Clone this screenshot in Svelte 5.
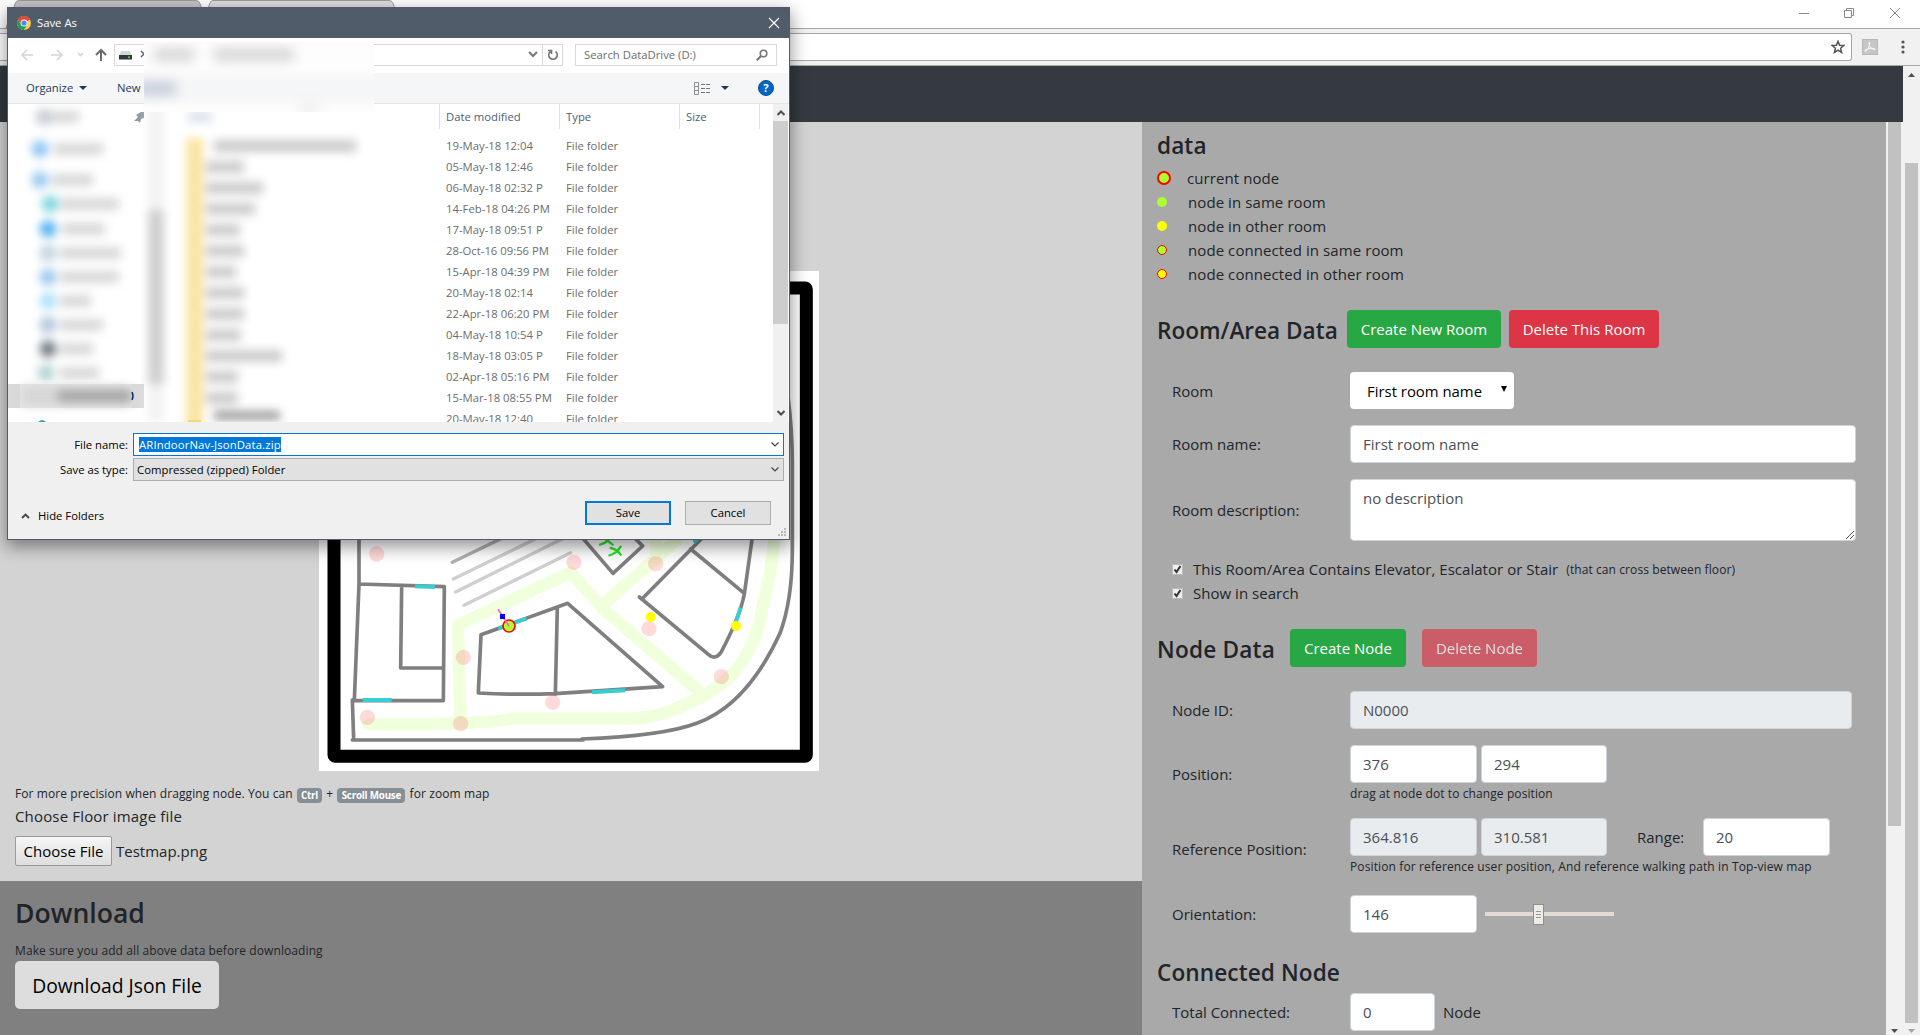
<script>
  const files = [
    ['19-May-18 12:04', 140], ['05-May-18 12:46', 36], ['06-May-18 02:32 P', 55],
    ['14-Feb-18 04:26 PM', 47], ['17-May-18 09:51 P', 32], ['28-Oct-16 09:56 PM', 36],
    ['15-Apr-18 04:39 PM', 28], ['20-May-18 02:14', 36], ['22-Apr-18 06:20 PM', 36],
    ['04-May-18 10:54 P', 33], ['18-May-18 03:05 P', 74], ['02-Apr-18 05:16 PM', 30],
    ['15-Mar-18 08:55 PM', 30], ['20-May-18 12:40', 0]
  ];
  // places in the folder tree: [icon x, y, icon colour, label x, label width]
  const places = [
    [36, 13, '#c9ced3', 46, 24], [32, 45, '#8fc5f2', 48, 46], [32, 76, '#98caf0', 46, 38],
    [42, 100, '#7cd8de', 54, 56], [40, 125, '#55b2f0', 56, 40], [40, 149, '#c0d3e0', 54, 58],
    [40, 173, '#9cc7ee', 54, 56], [40, 197, '#aee0fa', 54, 28], [40, 221, '#b3c5dd', 54, 40],
    [40, 245, '#737c83', 54, 30], [38, 269, '#b0d2d2', 54, 36]
  ];
  const legend = [
    ['current', 'current node'], ['same', 'node in same room'], ['other', 'node in other room'],
    ['same linked', 'node connected in same room'], ['other linked', 'node connected in other room']
  ];
  const spots = [
    [200, 72], [792, 97], [1037, 101], [1017, 296], [460, 382], [172, 562],
    [452, 581], [728, 517], [1234, 440]
  ];
</script>

<div class="screen">
  <header class="chrome">
    <div class="tabstrip">
      <svg class="tabs" width="420" height="28" viewBox="0 0 420 28">
        <path d="M6 28 15 4q1-3.500 4-3.500H196q3 0 4 3l9 24" fill="#c4c4c4" stroke="#9b9b9b" />
        <path d="M203 22 210 3q1-2.500 3-2.500H389q3 0 4 3l9 24" fill="#dedede" stroke="#9b9b9b" />
      </svg>
      <svg class="winctl" width="120" height="28" viewBox="0 0 120 28" fill="none" stroke="#8a8a8a">
        <path d="M9 13.500h10M54.500 10.500h7v7h-7zM56.500 10V8.500h7v7H62M100 8l10 10M110 8l-10 10" />
      </svg>
    </div>
    <div class="toolbar">
      <div class="omnibox">
        <svg width="14" height="14" viewBox="0 0 14 14" fill="none" stroke="#555" stroke-width="1.500"><path d="M7 1.300 8.600 5.200 12.900 5.500 9.600 8.200 10.600 12.500 7 10.200 3.400 12.500 4.400 8.200 1.100 5.500 5.400 5.200z" /></svg>
      </div>
      <svg class="pdf" width="16" height="16" viewBox="0 0 16 16"><rect width="16" height="16" fill="#b8b8b8" /><rect x="1" y="1" width="14" height="14" fill="#c6c6c6" /><path d="M7 3.500c1.500-1 .8 3-1 6-1.500 2.500-3 3.500-3 2.500 0-1.500 4-2.700 7-2.700s4 1.700 2 1.500C9 10.500 6.500 6 7 3.500z" fill="none" stroke="#f2f2f2" stroke-width="1.100" /></svg>
      <svg class="dots" width="4" height="14" viewBox="0 0 4 14" fill="#555"><circle cx="2" cy="2" r="1.600" /><circle cx="2" cy="7" r="1.600" /><circle cx="2" cy="12" r="1.600" /></svg>
    </div>
  </header>

  <div class="view">
    <div class="page">
      <nav class="navbar"></nav>
      <div class="cols">
        <main class="left">
          <section class="floor">
            <svg class="map" width="500" height="500" viewBox="0 0 500 500">
              <rect width="500" height="500" fill="#fff" />
              <g transform="translate(-9 259) scale(.33333)" fill="none" stroke-linecap="round" stroke-linejoin="round">
                <rect x="72" y="-726" width="1417" height="1405" rx="4" stroke="#000" stroke-width="39" />
                <g stroke="#f0ffdc" stroke-width="37">
                  <path d="M175 583 Q300 585 440 580 T600 566 H940 Q1040 566 1110 530 Q1240 480 1300 390 Q1345 320 1360 220 Q1395 90 1400 -100" />
                  <path d="M452 575 444 285 782 127 878 235 1165 482M878 225 1060 65 1130 0M1038 90V0" />
                </g>
                <g stroke="#cfcfcf" stroke-width="10">
                  <path d="M427 97 600 13" stroke="#b0b0b0" /><path d="M430 147 700 15M437 186 780 15M462 226 782 68" />
                </g>
                <g stroke="#7f7f7f" stroke-width="11">
                  <path d="M147 -100V162L133 512M127 510 131 628M147 162 403 170 400 512H127M275 168 272 414H400M127 630H820M815 627Q1060 618 1160 580C1270 540 1350 440 1410 310Q1447 210 1447 60V-200Q1447 -400 1395 -600" />
                  <path d="M513 314 773 220 1058 470 Q900 480 735 491 Q620 495 505 489zM742 232 736 493M780 -20 909 130 998 48 960 10" />
                  <path d="M1230 -30 998 205M988 201 1195 373Q1215 392 1233 367 1290 260 1303 192L1330 0M1142 57 1303 190" />
                </g>
                <g stroke="#38cdd0" stroke-width="12" stroke-linecap="butt">
                  <path d="M315 169 375 171M158 510H245M565 295 649 266M846 487 946 481M1278 274 1292 233M1152 38 1180 10" />
                </g>
                <path d="M870 44q22-6 34-24M884 26l24 18M898 76q20-4 34-26M902 54q20 4 30 20" stroke="#2be62b" stroke-width="7" />
                <g fill="#f66" fill-opacity=".24">
                  {#each spots as [cx, cy]}<circle {cx} {cy} r="23" />{/each}
                </g>
                <circle cx="1022" cy="261" r="15" fill="#ff0" /><circle cx="1278" cy="288" r="15" fill="#ff0" />
                <circle cx="597" cy="288" r="18" fill="#adff2f" stroke="#f00" stroke-width="5" />
                <path d="M564 238 597 288" stroke="#ff69b4" stroke-width="5" stroke-linecap="butt" />
                <rect x="570" y="252" width="15" height="15" fill="#00f" />
              </g>
            </svg>
            <p class="small hint">For more precision when dragging node. You can <b class="key ctrl">Ctrl</b> + <b class="key scroll">Scroll Mouse</b> for zoom map</p>
            <p class="choose">Choose Floor image file</p>
            <div class="filepick"><button>Choose File</button><span>Testmap.png</span></div>
          </section>
          <section class="download">
            <h2>Download</h2>
            <p class="small">Make sure you add all above data before downloading</p>
            <button>Download Json File</button>
          </section>
        </main>

        <aside class="right">
          <h3 class="datahead">data</h3>
          <ul>
            {#each legend as [kind, text]}
              <li><span class="dotbox"><i class="dot {kind}"></i></span>{text}</li>
            {/each}
          </ul>
          <div class="head roomhead"><h3>Room/Area Data</h3><button class="btn green newroom">Create New Room</button><button class="btn red delroom">Delete This Room</button></div>
          <div class="row r-room"><span class="label">Room</span><div class="select">First room name<svg width="8" height="6" viewBox="0 0 8 6"><path d="M1 0h6L4 6z" /></svg></div></div>
          <div class="row r-name"><span class="label">Room name:</span><div class="field wide">First room name</div></div>
          <div class="row r-desc"><span class="label">Room description:</span><div class="field area">no description<svg width="10" height="10" viewBox="0 0 10 10" stroke="#555"><path d="M1 9 9 1M5 9 9 5" /></svg></div></div>
          <div class="check first"><span class="box"><svg width="9" height="9" viewBox="0 0 9 9" fill="none" stroke="#333" stroke-width="2"><path d="M1.500 4.500 3.500 7 7.500 1" /></svg></span>This Room/Area Contains Elevator, Escalator or Stair<span class="small note">(that can cross between floor)</span></div>
          <div class="check"><span class="box"><svg width="9" height="9" viewBox="0 0 9 9" fill="none" stroke="#333" stroke-width="2"><path d="M1.500 4.500 3.500 7 7.500 1" /></svg></span>Show in search</div>
          <div class="head nodehead"><h3>Node Data</h3><button class="btn green newnode">Create Node</button><button class="btn red delnode">Delete Node</button></div>
          <div class="row r-id"><span class="label">Node ID:</span><div class="field id ro">N0000</div></div>
          <div class="row r-pos"><span class="label">Position:</span><div class="stack"><div class="pair"><div class="field num">376</div><div class="field num second">294</div></div><p class="small">drag at node dot to change position</p></div></div>
          <div class="row r-ref"><span class="label">Reference Position:</span><div class="stack"><div class="pair"><div class="field num ro">364.816</div><div class="field num second ro">310.581</div><span class="range">Range:</span><div class="field num">20</div></div><p class="small reftext">Position for reference user position, And reference walking path in Top-view map</p></div></div>
          <div class="row r-ori"><span class="label">Orientation:</span><div class="field num">146</div>
            <svg class="slider" width="129" height="22" viewBox="0 0 129 22"><path d="M0 8h129v4H0z" fill="#e0dcd5" /><rect x="48.500" y=".5" width="10" height="20" fill="#efebe7" stroke="#958c82" /><path d="M51 7.500h5M51 10.500h5M51 13.500h5" stroke="#999" /></svg>
          </div>
          <h3 class="connhead">Connected Node</h3>
          <div class="row r-total"><span class="label">Total Connected:</span><div class="field total">0</div><span class="unit">Node</span></div>
        </aside>
        <div class="innerbar"><i></i><svg width="7" height="4" viewBox="0 0 7 4"><path d="M0 0h7L3.500 4z" fill="#505050" /></svg></div>
      </div>
    </div>
    <div class="outerbar">
      <svg width="7" height="4" viewBox="0 0 7 4"><path d="M0 4h7L3.500 0z" fill="#505050" /></svg>
      <i></i>
      <svg class="down" width="7" height="4" viewBox="0 0 7 4"><path d="M0 0h7L3.500 4z" fill="#a3a3a3" /></svg>
    </div>
  </div>

  <div class="dialog">
    <div class="title">
      <svg width="14" height="14" viewBox="0 0 14 14"><circle cx="7" cy="7" r="7" fill="#fc4" /><path d="M7 7 .94 3.500A7 7 0 0 1 13.060 3.500z" fill="#dd4b3e" /><path d="M7 3.500h6.060A7 7 0 0 0 .94 3.500L4 8.700z" fill="#dd4b3e" /><path d="M.94 3.500A7 7 0 0 0 7 14L10 8.800 4 8.800z" fill="#1a9f58" /><circle cx="7" cy="7" r="3.500" fill="#f4f4f4" /><circle cx="7" cy="7" r="2.600" fill="#4a8af4" /></svg>
      <span>Save As</span>
      <svg class="x" width="12" height="12" viewBox="0 0 12 12" stroke="#fff" stroke-width="1.200"><path d="M1 1l10 10M11 1 1 11" /></svg>
    </div>
    <div class="addr">
      <svg width="104" height="20" viewBox="0 0 104 20" fill="none" stroke-width="1.700">
        <path d="M25 10H14M19 5l-5 5 5 5M43 10h11M49 5l5 5-5 5M70 8l2.500 2.500L75 8" stroke="#d6d6d6" />
        <path d="M93 16V5M88 10l5-5 5 5" stroke="#6b6b6b" stroke-width="2" />
      </svg>
      <div class="path">
        <svg class="drive" width="28" height="14" viewBox="0 0 28 14"><path d="M3 3h9l2 5H1z" fill="#d4d7da" /><rect x="1" y="7" width="13" height="4.500" fill="#34383b" /><circle cx="11" cy="9.300" r="1" fill="#3e4" /><path d="M23 3l3 3-3 3" fill="none" stroke="#666" stroke-width="1.500" /></svg>
        <svg class="chev" width="10" height="7" viewBox="0 0 10 7" fill="none" stroke="#777" stroke-width="2"><path d="M1 1l4 4 4-4" /></svg>
        <span class="reload"><svg width="12" height="12" viewBox="0 0 12 12" fill="none" stroke="#777" stroke-width="1.600"><path d="M3.500 2.500A4.300 4.300 0 1 0 8.500 2.500M1 1.500h3.500V5" /></svg></span>
      </div>
      <div class="search"><span>Search DataDrive (D:)</span><svg width="12" height="12" viewBox="0 0 12 12" fill="none" stroke="#777" stroke-width="1.600"><circle cx="7.500" cy="4.500" r="3.300" /><path d="M5 7 .8 11.200" stroke-width="2" /></svg></div>
    </div>
    <div class="tools">
      <span class="org">Organize</span><svg class="tri" width="8" height="4" viewBox="0 0 8 4"><path d="M0 0h8L4 4z" fill="#1e395b" /></svg>
      <span class="new">New</span>
      <svg class="views" width="17" height="13" viewBox="0 0 17 13" fill="none"><path d="M.5.500h4v12h-4zM.5 4.500h4M.5 8.500h4" stroke="#8f8f8f" /><path d="M7 2.500h4M12 2.500h4M7 6.500h4M12 6.500h4M7 10.500h4M12 10.500h4" stroke="#777" /></svg>
      <svg class="tri2" width="8" height="4" viewBox="0 0 8 4"><path d="M0 0h8L4 4z" fill="#1e395b" /></svg>
      <span class="help">?</span>
    </div>
    <div class="pane">
      <svg class="tree" width="431" height="318" viewBox="0 0 431 318">
        <path d="M0 280h136v24H0z" fill="#d9d9d9" />
        <g class="soft">
          {#each places as [x, y, color, lx, lw]}
            <circle cx={x} cy={y} r="8.500" fill={color} /><rect x={lx - 2} y={y - 6} width={lw + 3} height="12" fill="#d8d8d8" />
          {/each}
        </g>
        <path d="M12 276h112v36H12z" fill="#fff" fill-opacity=".4" />
        <g class="soft">
          <rect x="14" y="282" width="108" height="20" fill="#d6d6d6" /><rect x="50" y="286" width="74" height="12" fill="#a6a6a6" />
        </g>
        <path d="M124 280v24h12V280z" fill="#d9d9d9" /><path d="M124 288q2 4 0 8" stroke="#0b2a66" fill="none" stroke-width="1.500" />
        <path d="M30 318q4-4 8 0z" fill="#4a9dbf" />
        <path d="M136 0h295v318H136z" fill="#fff" />
        <path d="M126 17l4-4-2-2 5-3 3 0v6l-3 1-1 4-2-2z" fill="#8d99a5" />
        <g class="soft">
          <rect x="140" y="0" width="16" height="318" fill="#f2f2f2" /><rect x="140" y="106" width="16" height="174" fill="#cfcfcf" />
          <rect x="180" y="8" width="24" height="10" fill="#dadfec" />
          <rect x="178" y="34" width="17" height="290" fill="#fae3a2" />
          {#each files as [, w], i}
            {#if w}<rect x={i ? 198 : 206} y={36 + i * 21} width={w + 2} height="12" fill="#cbcbcb" />{/if}
          {/each}
          <rect x="206" y="307" width="66" height="9" fill="#999" />
        </g>
        <path d="M180 316h13v2h-13z" fill="#f7d774" />
      </svg>
      <div class="list">
        <div class="cols-head"><span>Date modified</span><span>Type</span><span class="size">Size</span></div>
        {#each files as [date]}
          <div class="file"><span>{date}</span><span>File folder</span></div>
        {/each}
      </div>
      <div class="bar">
        <svg width="8" height="6" viewBox="0 0 8 6" fill="none" stroke="#505050" stroke-width="2"><path d="M.5 5 4 1.500 7.500 5" /></svg>
        <i></i>
        <svg width="8" height="6" viewBox="0 0 8 6" fill="none" stroke="#505050" stroke-width="2"><path d="M.5 1 4 4.500 7.500 1" /></svg>
      </div>
    </div>
    <div class="form">
      <div class="frow"><span class="flabel">File name:</span><div class="combo active"><span class="sel">ARIndoorNav-JsonData.zip</span><svg width="8" height="5" viewBox="0 0 8 5" fill="none" stroke="#444" stroke-width="1.200"><path d="M.5.500 4 4 7.500.500" /></svg></div></div>
      <div class="frow"><span class="flabel">Save as type:</span><div class="combo"><span>Compressed (zipped) Folder</span><svg width="8" height="5" viewBox="0 0 8 5" fill="none" stroke="#444" stroke-width="1.200"><path d="M.5.500 4 4 7.500.500" /></svg></div></div>
      <div class="actions">
        <svg width="9" height="6" viewBox="0 0 9 6" fill="none" stroke="#444" stroke-width="1.800"><path d="M1 5 4.500 1.500 8 5" /></svg><span class="hide">Hide Folders</span>
        <button class="primary">Save</button><button>Cancel</button>
      </div>
      <svg class="grip" width="8" height="8" viewBox="0 0 8 8" fill="#b8b8b8"><path d="M6 0h2v2H6zM3 3h2v2H3zM6 3h2v2H6zM0 6h2v2H0zM3 6h2v2H3zM6 6h2v2H6z" /></svg>
    </div>
    <div class="smudge"><i class="s1"></i><i class="s2"></i><i class="s3"></i><i class="s4"></i></div>
  </div>
</div>

<style>
  :global(body) { margin: 0; overflow: hidden; }
  * { box-sizing: border-box; }
  svg { display: block; flex: none; }
  p, h2, h3, ul { margin: 0; padding: 0; }
  button { font: inherit; letter-spacing: inherit; padding: 0; white-space: nowrap; }
  .screen { position: relative; width: 1920px; height: 1035px; overflow: hidden; display: flex; flex-direction: column; font: 15px/24px "Open Sans", "Noto Sans", sans-serif; color: #212529; white-space: nowrap; }
  .chrome { height: 66px; flex: none; background: #f1f1f1; border-bottom: 1px solid #aaa; }
  .tabstrip { height: 29px; background: #fff; border-bottom: 1px solid #a6a6a6; display: flex; justify-content: space-between; }
  .winctl { margin-right: 10px; }
  .toolbar { height: 36px; display: flex; align-items: center; }
  .omnibox { width: 1852px; height: 28px; border: 1px solid #a6a6a6; border-left: 0; border-radius: 0 3px 3px 0; background: #fff; display: flex; align-items: center; justify-content: flex-end; padding-right: 6px; }
  .pdf { margin-left: 10px; }
  .dots { margin-left: 23px; }
  .view { flex: 1; min-height: 0; display: flex; }
  .page { width: 1903px; display: flex; flex-direction: column; }
  .navbar { height: 56px; flex: none; background: #343a40; }
  .cols { flex: 1; min-height: 0; display: flex; }
  .left { width: 1142px; display: flex; flex-direction: column; }
  .floor { height: 759px; background: #d3d3d3; padding: 149px 15px 0; }
  .map { margin-left: 304px; }
  .small { font-size: 12px; line-height: 20px; letter-spacing: .09px; }
  .hint { margin-top: 13px; height: 20px; }
  .key { display: inline-block; height: 15px; margin: 0 1px; border-radius: 4px; background: #868e96; color: #fff; font-size: 9.800px; line-height: 15px; text-align: center; vertical-align: -1px; letter-spacing: -.2px; }
  .ctrl { width: 25px; }
  .scroll { width: 68px; }
  .choose { height: 24px; letter-spacing: .16px; }
  .filepick { display: flex; align-items: center; margin-top: 8px; gap: 4px; }
  .filepick button { width: 97px; height: 30px; border: 1px solid #999; border-radius: 2px; background: linear-gradient(#f6f6f6, #dedede); color: #000; }
  .download { flex: 1; background: #808080; padding: 15px; }
  .download h2 { font-size: 26.600px; line-height: 34px; font-weight: 600; height: 45px; }
  .download button { display: block; width: 204px; height: 48px; border: 0; border-radius: 5px; background: #ddd; font-size: 19.300px; color: #000; padding-top: 1px; }
  .right { width: 744px; background: #a9a9a9; padding: 9px 0 0 15px; overflow: hidden; }
  h3 { font-size: 22.600px; line-height: 30px; font-weight: 600; letter-spacing: .1px; }
  ul { list-style: none; margin-top: 5px; letter-spacing: .08px; }
  li { height: 24px; display: flex; line-height: 25px; }
  .dotbox { width: 31px; display: flex; align-items: center; }
  li:first-child .dotbox { width: 30px; }
  .dot { width: 10px; height: 10px; border-radius: 50%; background: #adff2f; }
  .current { width: 14px; height: 14px; border: 2px solid red; }
  .other { background: #ff0; }
  .linked { border: 1px solid red; }
  .head { display: flex; align-items: center; height: 38px; }
  .roomhead { margin-top: 24px; }
  .roomhead h3 { width: 190px; padding-top: 4px; letter-spacing: 0; }
  .btn { height: 38px; border: 0; border-radius: 4px; color: #fff; }
  .green { background: #28a745; }
  .red { background: #dc3545; }
  .newroom { width: 154px; margin-right: 8px; }
  .delroom { width: 150px; }
  .nodehead { margin-top: 24px; }
  .nodehead h3 { width: 133px; padding-top: 4px; letter-spacing: .2px; }
  .newnode { width: 116px; margin-right: 16px; }
  .delnode { width: 115px; opacity: .65; }
  .row { display: flex; align-items: center; padding-left: 15px; }
  .label { width: 178px; }
  .r-room { margin-top: 24px; height: 37px; }
  .r-name { margin-top: 16px; }
  .r-desc { margin-top: 16px; }
  .select { width: 164px; height: 37px; border-radius: 4px; background: #fff; color: #000; display: flex; align-items: center; justify-content: space-between; padding: 0 6px 0 17px; font-size: 14.900px; }
  .select svg { margin-top: -4px; }
  .field { height: 38px; border: 1px solid #ced4da; border-radius: 4px; background: #fff; color: #495057; padding: 6px 12px; }
  .wide { width: 506px; }
  .area { width: 506px; height: 62px; display: flex; justify-content: space-between; }
  .area svg { align-self: flex-end; margin: 0 -12px -6px 0; }
  .ro { background: #e9ecef; }
  .id { width: 502px; }
  .num { width: 127px; }
  .second { width: 126px; }
  .check { display: flex; align-items: center; height: 24px; padding-left: 15px; letter-spacing: .03px; }
  .check.first { margin-top: 16px; }
  .box { width: 11px; height: 11px; background: #eee; border: 1px solid #bbb; margin-right: 10px; }
  .note { margin-left: 8px; padding-top: 2px; }
  .r-id { margin-top: 24px; }
  .r-pos { margin-top: 16px; height: 58px; }
  .r-ref { margin-top: 15px; height: 62px; }
  .pair { display: flex; gap: 4px; align-items: center; }
  .range { width: 88px; padding-left: 26px; }
  .stack { align-self: flex-start; }
  .stack .small { padding-top: 1px; }
  .reftext { letter-spacing: .12px; }
  .r-ori { margin-top: 15px; }
  .slider { margin: 1px 0 0 8px; }
  .connhead { margin-top: 25px; height: 35px; }
  .unit { margin-left: 8px; }
  .total { width: 85px; }
  .innerbar { width: 17px; background: #f1f1f1; display: flex; flex-direction: column; align-items: center; justify-content: space-between; padding-bottom: 2px; }
  .innerbar i { width: 13px; height: 704px; background: #c1c1c1; }
  .outerbar { width: 17px; background: #f1f1f1; display: flex; flex-direction: column; align-items: center; padding-top: 7px; }
  .outerbar i { width: 13px; height: 860px; margin-top: 86px; background: #c1c1c1; }
  .down { margin-top: 6px; }

  .dialog { position: absolute; left: 7px; top: 7px; width: 783px; height: 533px; border: 1px solid #505c6a; background: #f0f0f0; box-shadow: 0 6px 16px 1px rgba(0, 0, 0, .42); font-size: 11.300px; line-height: 16px; color: #000; display: flex; flex-direction: column; }
  .title { height: 30px; flex: none; background: #505c6a; color: #fff; display: flex; align-items: center; padding: 0 9px; }
  .title span { margin-left: 6px; }
  .x { margin-left: auto; }
  .addr { height: 35px; flex: none; background: #fff; display: flex; align-items: center; padding-bottom: 2px; }
  .path { width: 449px; height: 22px; margin-left: 2px; border: 1px solid #d9d9d9; display: flex; align-items: center; }
  .drive { margin-left: 3px; }
  .chev { margin-left: auto; margin-right: 4px; }
  .reload { width: 20px; height: 20px; border-left: 1px solid #d9d9d9; display: grid; place-items: center; }
  .search { width: 202px; height: 22px; margin-left: 12px; border: 1px solid #d9d9d9; display: flex; align-items: center; justify-content: space-between; padding: 0 8px; color: #6d6d6d; }
  .tools { height: 31px; flex: none; background: #f5f6f7; border-bottom: 1px solid #e5e5e5; display: flex; align-items: center; padding-left: 18px; color: #1e395b; }
  .org { width: 53px; }
  .new { margin-left: 30px; }
  .views { margin-left: auto; }
  .tri2 { margin: 0 29px 0 10px; }
  .help { width: 16px; height: 16px; border-radius: 50%; border: 1px solid #0a4f91; background: #0067c5; color: #fff; font-weight: 700; line-height: 14px; text-align: center; margin-right: 15px; }
  .pane { height: 318px; flex: none; background: #fff; display: flex; overflow: hidden; }
  .soft { filter: blur(5px); }
  .list { width: 334px; overflow: hidden; color: #6d6d6d; }
  .cols-head { height: 25px; margin-bottom: 6px; display: flex; color: #4c607a; line-height: 26px; }
  .cols-head span { width: 120px; padding-left: 6px; border-left: 1px solid #e0e0e0; }
  .cols-head .size { width: 81px; border-right: 1px solid #e0e0e0; }
  .file { height: 21px; line-height: 21px; display: flex; }
  .file span { width: 120px; padding-left: 7px; }
  .bar { width: 15px; background: #f0f0f0; display: flex; flex-direction: column; align-items: center; padding: 6px 0; }
  .bar i { width: 15px; height: 203px; margin: 5px 0 auto; background: #cdcdcd; }
  .form { flex: 1; position: relative; padding-top: 11px; }
  .frow { display: flex; align-items: center; height: 23px; margin-bottom: 2px; }
  .flabel { width: 120px; text-align: right; }
  .combo { width: 651px; height: 23px; margin-left: 5px; border: 1px solid #adadad; background: #e1e1e1; display: flex; align-items: center; justify-content: space-between; padding: 0 4px 0 3px; letter-spacing: .04px; }
  .active { border-color: #0078d7; background: #fff; padding-left: 5px; padding-bottom: 1px; letter-spacing: .14px; }
  .sel { background: #0078d7; color: #fff; line-height: 15px; }
  .actions { display: flex; align-items: center; margin-top: 20px; padding-left: 13px; height: 24px; }
  .hide { width: 540px; padding: 6px 0 0 8px; }
  .actions svg { margin-top: 6px; }
  .actions button { width: 86px; height: 24px; background: #e1e1e1; border: 1px solid #adadad; color: #000; margin-right: 14px; }
  .actions .primary { border: 2px solid #0078d7; margin-left: 15px; }
  .grip { position: absolute; right: 3px; bottom: 3px; }
  .smudge { position: absolute; left: 136px; top: 34px; width: 230px; height: 70px; overflow: hidden; background: linear-gradient(#fdfdfd 0 26px, #f5f6f7 40px 54px, #fdfdfd 68px); }
  .smudge i { position: absolute; height: 13px; background: #d6d6d6; filter: blur(6px); }
  .s1 { left: 10px; top: 6px; width: 40px; }
  .s2 { left: 70px; top: 6px; width: 80px; }
  .smudge .s3 { left: -6px; top: 40px; width: 38px; background: #c3ccd9; }
  .smudge .s4 { left: 155px; top: 60px; width: 20px; background: #f0f0f0; }
</style>
